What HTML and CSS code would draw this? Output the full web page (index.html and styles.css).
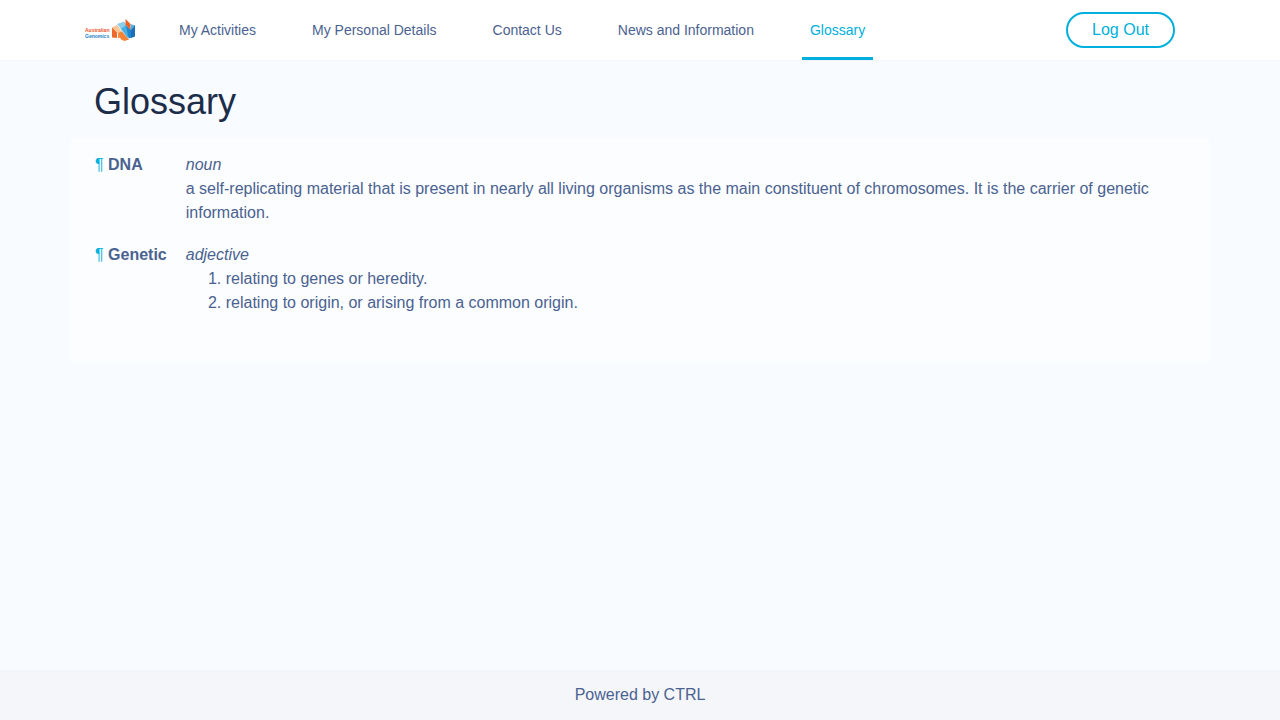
FILE: index.html
```html
<!DOCTYPE html>
<html lang="en">
<head>
<meta charset="utf-8">
<meta name="viewport" content="width=device-width, initial-scale=1">
<title>Glossary</title>
<link rel="stylesheet" href="styles.css">
</head>
<body>
<header class="site-header">
  <div class="container header-bar">
    <a class="brand" href="#" aria-label="Australian Genomics">
      <svg class="logo" viewBox="0 0 50 22" role="img" aria-hidden="true">
        <text class="logo-top" x="0" y="13">Australian</text>
        <text class="logo-bottom" x="0" y="19">Genomics</text>
        <path fill="#ee6a2c" d="M27 8.500 32 11V19L27 18.500Z"/>
        <path fill="#f58a45" d="M33 12 36 16V18L33 19.500Z"/>
        <path fill="#f9c596" d="M27 8.500 32 6 38 14 35.500 17.500Z"/>
        <path fill="#f58235" d="M33 14 37 12.500 44 20.500 39.500 22 36 20.500Z"/>
        <path fill="#8ccdea" d="M32 5 39 2.500 42 7 37 11.500Z"/>
        <path fill="#4aaede" d="M36 10 41 6 44 10 43 19 41.500 17.500Z"/>
        <path fill="#2188cf" d="M41 6 47.500 13 47 18.500 43.500 19.500Z"/>
        <path fill="#ef5f1f" d="M40.500 0 45.500 5V11L40.500 5.500Z"/>
        <path fill="#1b6fba" d="M45.500 9 50 6V17.500L46 19Z"/>
        <path fill="#56b3e3" d="M45.500 5 50 6.500 46 11Z"/>
      </svg>
    </a>
    <nav class="nav" aria-label="Main">
      <a class="nav-link" href="#">My Activities</a>
      <a class="nav-link" href="#">My Personal Details</a>
      <a class="nav-link" href="#">Contact Us</a>
      <a class="nav-link" href="#">News and Information</a>
      <a class="nav-link active" href="#" aria-current="page">Glossary</a>
    </nav>
    <button class="logout" type="button">Log Out</button>
  </div>
</header>
<main class="container content">
  <h1 class="title">Glossary</h1>
  <section class="card">
    <table class="glossary">
      <tr id="dna">
        <th class="term" scope="row"><a class="anchor" href="#dna">¶</a> DNA</th>
        <td class="meaning"><em>noun</em><br>a self-replicating material that is present in nearly all living organisms as the main constituent of chromosomes. It is the carrier of genetic information.</td>
      </tr>
      <tr id="genetic">
        <th class="term" scope="row"><a class="anchor" href="#genetic">¶</a> Genetic</th>
        <td class="meaning"><em>adjective</em>
          <ol class="senses">
            <li>relating to genes or heredity.</li>
            <li>relating to origin, or arising from a common origin.</li>
          </ol>
        </td>
      </tr>
    </table>
  </section>
</main>
<footer class="site-footer">Powered by CTRL</footer>
</body>
</html>
```
FILE: styles.css
```css
* { box-sizing: border-box; }

body {
  display: flex;
  flex-direction: column;
  min-height: 100vh;
  margin: 0;
  background: #f8fbff;
  color: #4a6290;
  font-family: "Liberation Sans", Arial, sans-serif;
  font-size: 16px;
  line-height: 24px;
}

a { text-decoration: none; }

.container {
  width: 100%;
  max-width: 1140px;
  margin: 0 auto;
}

.site-header {
  border-bottom: 1px solid #f5f6fa;
  background: #fff;
}

.header-bar {
  display: flex;
  align-items: center;
  height: 60px;
  padding: 0 35px 0 15px;
}

.brand {
  display: flex;
  margin-right: 36px;
}

.logo {
  width: 50px;
  height: 22px;
}

.logo-top,
.logo-bottom {
  font-size: 5px;
  font-weight: bold;
}

.logo-top { fill: #f0562a; }
.logo-bottom { fill: #1f7fc4; }

.nav {
  display: flex;
  flex: 1;
  align-self: stretch;
  gap: 40px;
}

.nav-link {
  display: flex;
  align-items: center;
  padding: 3px 8px 0;
  border-bottom: 3px solid transparent;
  color: #4a6290;
  font-size: 14px;
}

.nav-link.active {
  border-color: #00b0dc;
  color: #00b0dc;
}

.logout {
  height: 36px;
  padding: 0 24px;
  border: 2px solid #00b0dc;
  border-radius: 18px;
  background: #fff;
  color: #00b0dc;
  font: inherit;
}

.content { flex: 1; }

.title {
  margin: 0;
  padding: 19px 24px 14px;
  color: #1c2d49;
  font-size: 36px;
  font-weight: normal;
  line-height: 44px;
}

.card {
  padding: 15px 25px 30px;
  border-radius: 4px;
  background: #fcfdff;
}

.glossary { border-spacing: 0; }

.term,
.meaning {
  padding: 0 0 18px;
  text-align: left;
  vertical-align: top;
}

.term {
  padding-right: 19px;
  white-space: nowrap;
}

.anchor {
  color: #00b0dc;
  font-weight: normal;
}

.senses {
  margin: 0;
  padding-left: 40px;
}

.site-footer {
  padding: 13px 0;
  background: #f5f6fa;
  text-align: center;
}
```
